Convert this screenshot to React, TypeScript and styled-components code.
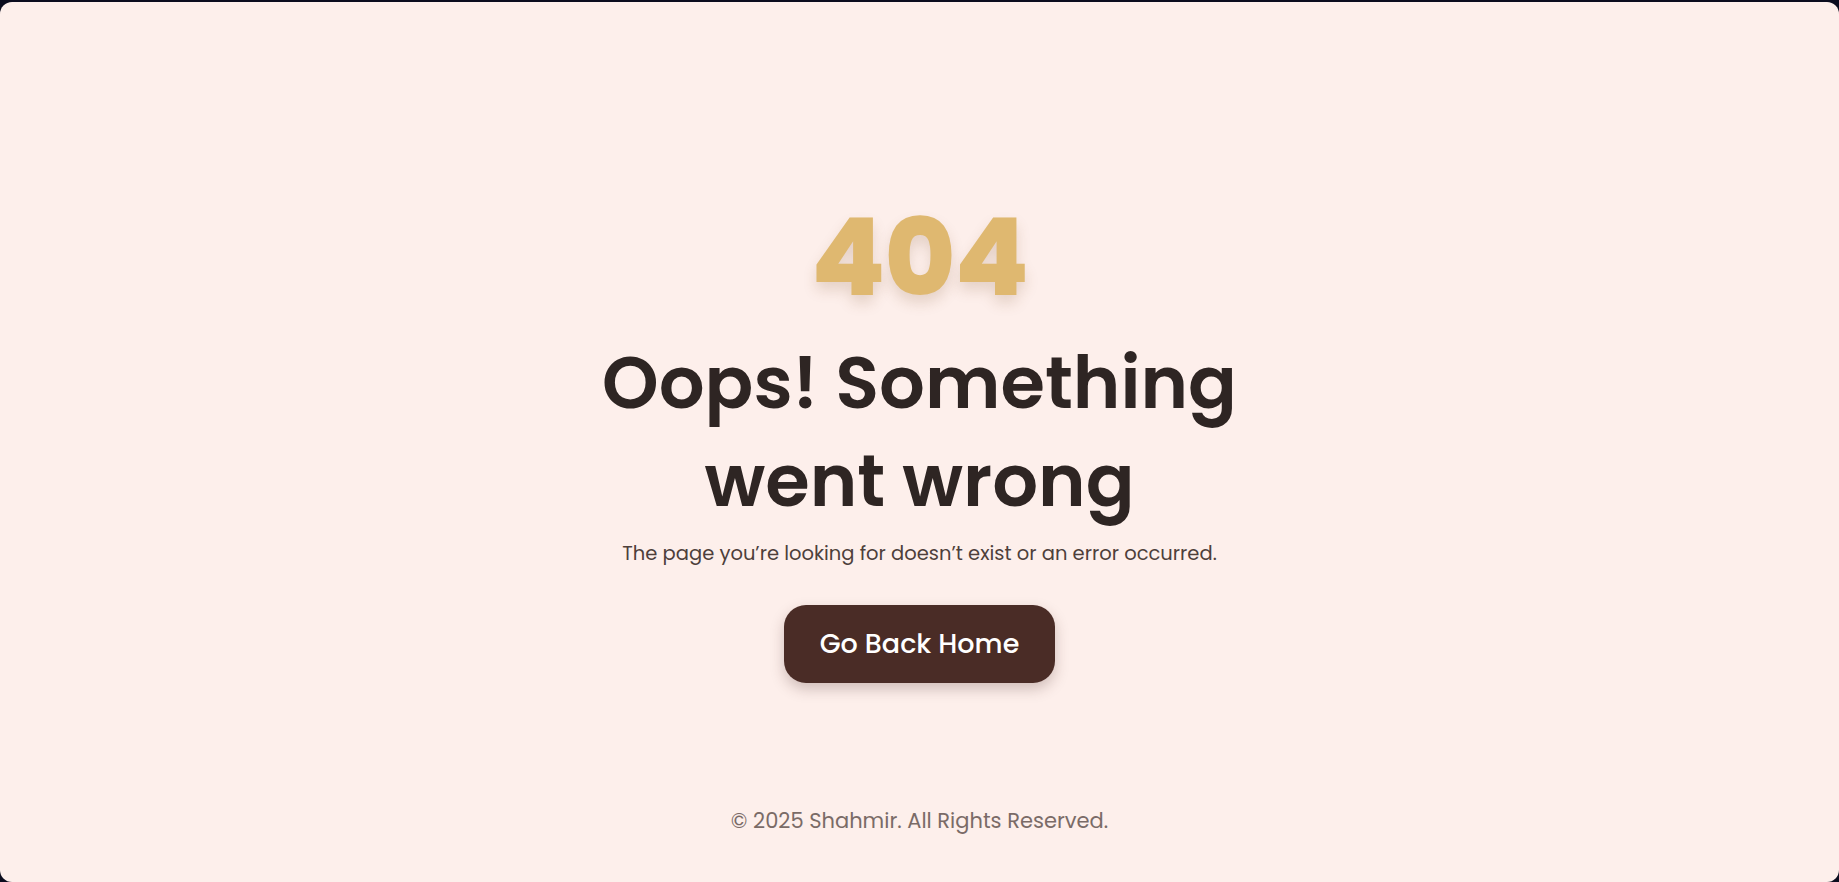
import styled, { createGlobalStyle } from 'styled-components';

const GlobalStyle = createGlobalStyle`
  html, body {
    margin: 0;
    padding: 0;
    height: 100%;
    background: #0b0c1e;
  }
  #root {
    height: 100%;
  }
`;

const Frame = styled.div`
  box-sizing: border-box;
  height: 100%;
  padding-top: 2px;
`;

const Page = styled.div`
  height: 100%;
  display: flex;
  flex-direction: column;
  background: #fdefeb;
  border-radius: 12px;
  font-family: "Poppins", "Inter", "Noto Sans", sans-serif;
`;

const Main = styled.main`
  flex: 1;
  display: flex;
  flex-direction: column;
  align-items: center;
  justify-content: center;
  text-align: center;
  padding-top: 80px;
`;

const Code = styled.h1`
  margin: 0;
  font-size: 108px;
  font-weight: 800;
  line-height: 1;
  color: #dfb870;
  text-shadow: 0 8px 14px rgba(120, 80, 40, 0.18);
  letter-spacing: -1px;
`;

const Title = styled.h2`
  margin: 22px 0 0;
  font-size: 72px;
  font-weight: 600;
  line-height: 1.36;
  color: #2e2523;
  max-width: 680px;
`;

const Subtitle = styled.p`
  margin: 9px 0 0;
  font-size: 19.5px;
  color: #4e3f3b;
`;

const HomeButton = styled.a`
  margin-top: 37px;
  display: inline-flex;
  align-items: center;
  justify-content: center;
  width: 271px;
  height: 78px;
  box-sizing: border-box;
  border-radius: 22px;
  background: #4a2c26;
  color: #fff;
  font-size: 27px;
  font-weight: 500;
  text-decoration: none;
  box-shadow: 0 6px 14px rgba(74, 44, 38, 0.25);
`;

const Footer = styled.footer`
  padding: 0 0 46px;
  text-align: center;
  font-size: 21px;
  color: #7a6b67;
`;

export default function App() {
  return (
    <>
      <GlobalStyle />
      <Frame>
        <Page>
          <Main>
            <Code>404</Code>
            <Title>Oops! Something went wrong</Title>
            <Subtitle>The page you’re looking for doesn’t exist or an error occurred.</Subtitle>
            <HomeButton href="#">Go Back Home</HomeButton>
          </Main>
          <Footer>© 2025 Shahmir. All Rights Reserved.</Footer>
        </Page>
      </Frame>
    </>
  );
}
